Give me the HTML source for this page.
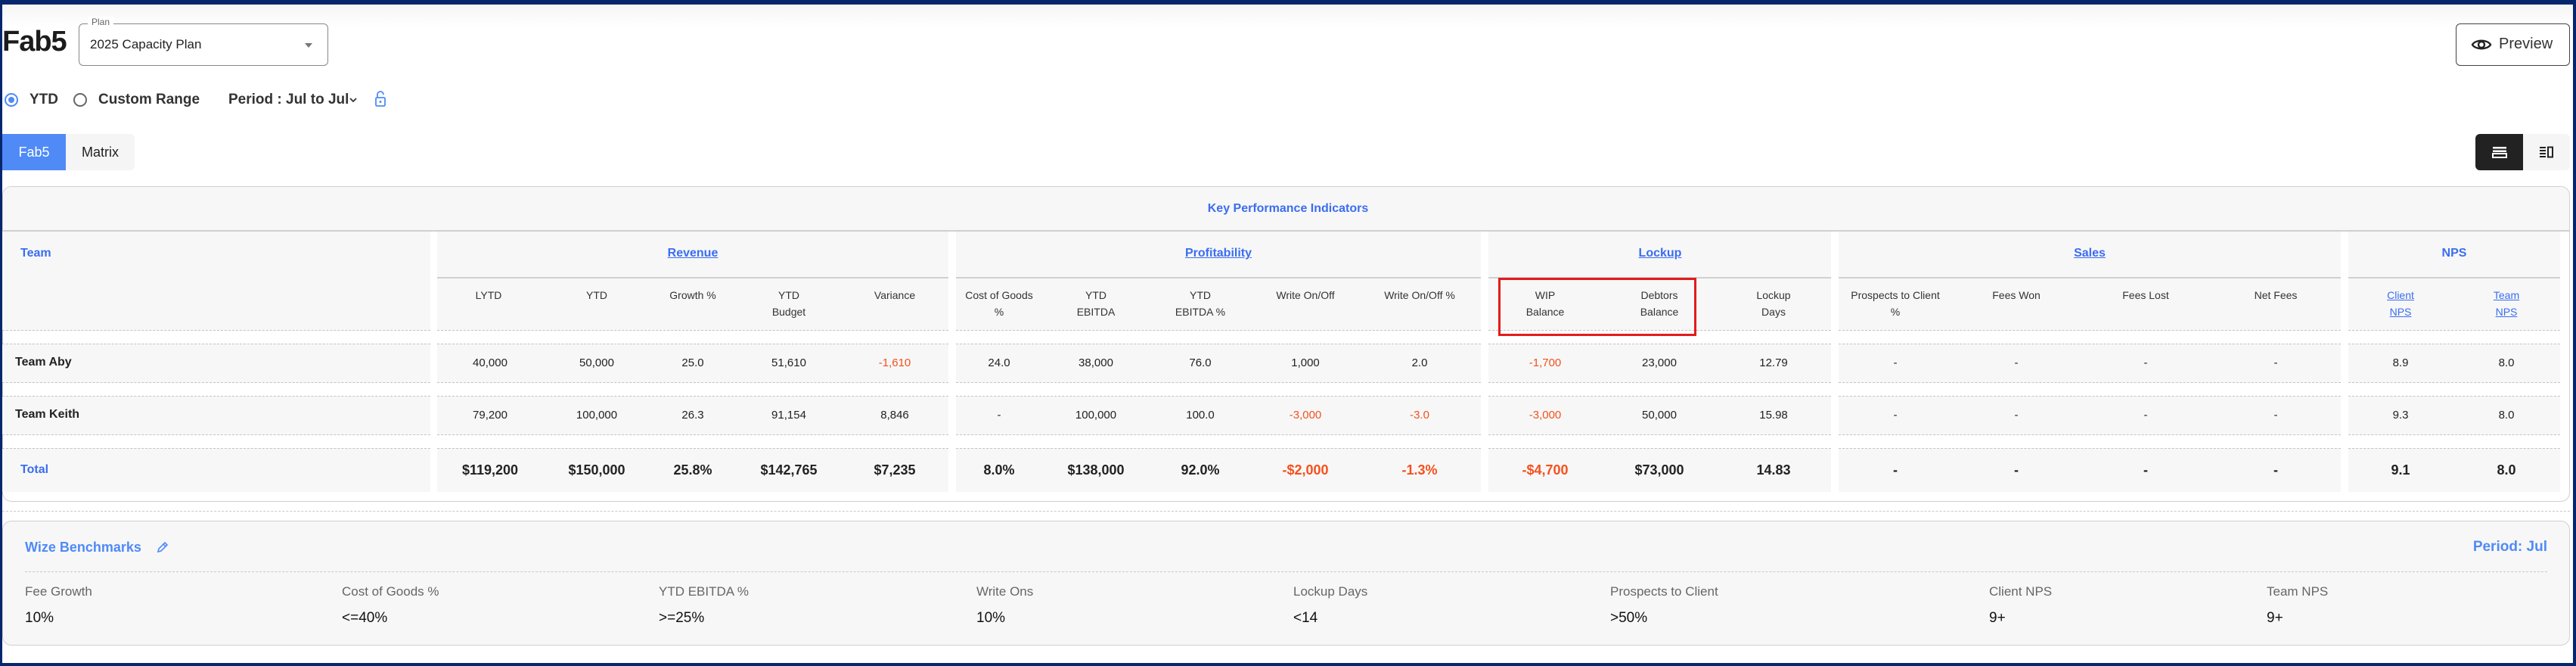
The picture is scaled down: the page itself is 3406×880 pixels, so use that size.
<!DOCTYPE html>
<html><head><meta charset="utf-8"><style>
*{margin:0;padding:0;box-sizing:border-box}
body{width:3406px;height:880px;position:relative;overflow:hidden;background:#fff;font-family:"Liberation Sans",sans-serif;color:#222}
.frame{position:absolute;left:0;top:0;width:3406px;height:880px;border-style:solid;border-color:#05266f;border-width:6px 4px 4px 3px;z-index:50;pointer-events:none}
.a{position:absolute}
.t{position:absolute;transform:translateX(-50%);text-align:center;white-space:nowrap}
.b{position:absolute;background:#f7f7f7}
.c1{left:3px;width:566px}.c2{left:578px;width:676px}.c3{left:1264px;width:694px}.c4{left:1968px;width:453px}.c5{left:2431px;width:664px}.c6{left:3105px;width:280px}
.r1{top:306px;height:131px;border-bottom:1px dashed #c4c4c4}
.r2{top:454px;height:52px;border-top:1px dashed #c4c4c4;border-bottom:1px dashed #c4c4c4}
.r3{top:523px;height:52px;border-top:1px dashed #c4c4c4;border-bottom:1px dashed #c4c4c4}
.r4{top:592px;height:58px;border-top:1px dashed #c4c4c4}
.gl{position:absolute;top:366px;height:2px;background:#d0d0d0}
.gh{position:absolute;top:326px;font-size:16px;font-weight:bold;color:#3a6df0;text-decoration:underline;transform:translateX(-50%)}
.sh{font-size:14px;line-height:22px;color:#333;top:379px}
.d1{top:471px;font-size:15px}.d2{top:540px;font-size:15px}.d3{top:611px;font-size:18px;font-weight:bold}
.red{color:#f4511e}
.bl{position:absolute;top:772px;font-size:17px;color:#666}
.bv{position:absolute;top:806px;font-size:19px;color:#111}
</style></head><body>
<div class="frame"></div>
<div class="a" style="left:0;top:6px;width:3406px;height:30px;background:linear-gradient(#f5f5f5,#fff)"></div>

<div class="a" style="left:3px;top:34px;font-size:38px;font-weight:bold;color:#1c1c1c;letter-spacing:-1px">Fab5</div>
<div class="a" style="left:104px;top:31px;width:330px;height:56px;border:1.5px solid #888;border-radius:6px"></div>
<div class="a" style="left:116px;top:22px;background:#fff;padding:0 5px;font-size:12px;color:#666">Plan</div>
<div class="a" style="left:119px;top:49px;font-size:17px;color:#222">2025 Capacity Plan</div>
<div class="a" style="left:403px;top:57px;width:0;height:0;border-left:5px solid transparent;border-right:5px solid transparent;border-top:6px solid #777"></div>

<div class="a" style="left:6px;top:123px;width:18px;height:18px;border:2px solid #4f8af7;border-radius:50%"><div style="margin:3px;width:8px;height:8px;border-radius:50%;background:#4f8af7"></div></div>
<div class="a" style="left:39px;top:121px;font-size:19px;font-weight:bold;color:#333">YTD</div>
<div class="a" style="left:97px;top:123px;width:18px;height:18px;border:2px solid #666;border-radius:50%"></div>
<div class="a" style="left:130px;top:121px;font-size:19px;font-weight:bold;color:#333">Custom Range</div>
<div class="a" style="left:302px;top:121px;font-size:19px;font-weight:bold;color:#333">Period : Jul to Jul</div>
<svg class="a" style="left:461px;top:127px" width="12" height="10" viewBox="0 0 12 10"><path d="M2 3l4 4 4-4" fill="none" stroke="#333" stroke-width="1.8"/></svg>
<svg class="a" style="left:495px;top:119px" width="16" height="24" viewBox="0 0 16 24"><path d="M4 10V6a4 4 0 0 1 8 0" fill="none" stroke="#4f8af7" stroke-width="1.8"/><rect x="2" y="10" width="12" height="11" rx="1.5" fill="none" stroke="#4f8af7" stroke-width="1.8"/><circle cx="8" cy="15.5" r="1.5" fill="#4f8af7"/></svg>

<div class="a" style="left:3px;top:177px;width:175px;height:48px;background:#f5f5f5;border-radius:0 6px 6px 0"></div>
<div class="a" style="left:3px;top:177px;width:84px;height:48px;background:#4f8af7;color:#fff;font-size:18px;line-height:48px;text-align:center">Fab5</div>
<div class="a" style="left:87px;top:177px;width:91px;height:48px;color:#222;font-size:18px;line-height:48px;text-align:center">Matrix</div>

<div class="a" style="left:3247px;top:31px;width:151px;height:56px;border:1.5px solid #444;border-radius:6px;font-size:20px;color:#333;line-height:53px;padding-left:56px">Preview</div>
<svg class="a" style="left:3267px;top:49px" width="28" height="20" viewBox="0 0 28 20"><path d="M2 10C6 3 22 3 26 10C22 17 6 17 2 10Z" fill="none" stroke="#222" stroke-width="2.4"/><circle cx="14" cy="10" r="4" fill="none" stroke="#222" stroke-width="2.4"/></svg>
<div class="a" style="left:3273px;top:177px;width:125px;height:48px;background:#f5f5f5;border-radius:6px"></div>
<div class="a" style="left:3273px;top:177px;width:63px;height:48px;background:#222;border-radius:6px 0 0 6px"></div>
<svg class="a" style="left:3295px;top:193px" width="20" height="16" viewBox="0 0 20 16"><rect x="1" y="1" width="18" height="2.5" fill="#fff"/><rect x="1" y="5.5" width="18" height="2.5" fill="#fff"/><rect x="1" y="10" width="18" height="5" fill="none" stroke="#fff" stroke-width="2"/></svg>
<svg class="a" style="left:3357px;top:193px" width="20" height="16" viewBox="0 0 20 16"><path d="M1 2h8M1 6h8M1 10h8M1 14h8" stroke="#222" stroke-width="2"/><rect x="12" y="1.5" width="6" height="13" fill="none" stroke="#222" stroke-width="2"/></svg>

<div class="a" style="left:3px;top:246px;width:3395px;height:417px;border:1.5px solid #d0d0d0;border-radius:12px;background:#fff"></div>
<div class="a" style="left:4px;top:247px;width:3393px;height:59px;background:#f7f7f7;border-bottom:2px solid #d0d0d0;border-radius:11px 11px 0 0"></div>
<div class="t" style="left:1703px;top:267px;font-size:16px;font-weight:bold;color:#3a6df0">Key Performance Indicators</div>

<div class="b c1 r1"></div><div class="b c2 r1"></div><div class="b c3 r1"></div><div class="b c4 r1"></div><div class="b c5 r1"></div><div class="b c6 r1"></div>
<div class="b c1 r2"></div><div class="b c2 r2"></div><div class="b c3 r2"></div><div class="b c4 r2"></div><div class="b c5 r2"></div><div class="b c6 r2"></div>
<div class="b c1 r3"></div><div class="b c2 r3"></div><div class="b c3 r3"></div><div class="b c4 r3"></div><div class="b c5 r3"></div><div class="b c6 r3"></div>
<div class="b c1 r4"></div><div class="b c2 r4"></div><div class="b c3 r4"></div><div class="b c4 r4"></div><div class="b c5 r4"></div><div class="b c6 r4"></div>
<div class="gl c2"></div><div class="gl c3"></div><div class="gl c4"></div><div class="gl c5"></div><div class="gl c6"></div>

<div class="a" style="left:27px;top:326px;font-size:16px;font-weight:bold;color:#3a6df0">Team</div>
<div class="gh" style="left:916px">Revenue</div>
<div class="gh" style="left:1611px">Profitability</div>
<div class="gh" style="left:2195px">Lockup</div>
<div class="gh" style="left:2763px">Sales</div>
<div class="gh" style="left:3245px;text-decoration:none">NPS</div>

<div class="t sh" style="left:646px">LYTD</div>
<div class="t sh" style="left:789px">YTD</div>
<div class="t sh" style="left:916px">Growth %</div>
<div class="t sh" style="left:1043px">YTD<br>Budget</div>
<div class="t sh" style="left:1183px">Variance</div>
<div class="t sh" style="left:1321px">Cost of Goods<br>%</div>
<div class="t sh" style="left:1449px">YTD<br>EBITDA</div>
<div class="t sh" style="left:1587px">YTD<br>EBITDA %</div>
<div class="t sh" style="left:1726px">Write On/Off</div>
<div class="t sh" style="left:1877px">Write On/Off %</div>
<div class="t sh" style="left:2043px">WIP<br>Balance</div>
<div class="t sh" style="left:2194px">Debtors<br>Balance</div>
<div class="t sh" style="left:2345px">Lockup<br>Days</div>
<div class="t sh" style="left:2506px">Prospects to Client<br>%</div>
<div class="t sh" style="left:2666px">Fees Won</div>
<div class="t sh" style="left:2837px">Fees Lost</div>
<div class="t sh" style="left:3009px">Net Fees</div>
<div class="t sh" style="left:3174px;color:#3a6df0;text-decoration:underline">Client<br>NPS</div>
<div class="t sh" style="left:3314px;color:#3a6df0;text-decoration:underline">Team<br>NPS</div>
<div class="a" style="left:1981px;top:367px;width:262px;height:77px;border:3.5px solid #e31b1b"></div>

<div class="a" style="left:20px;top:470px;font-size:16px;font-weight:bold">Team Aby</div>
<div class="t d1" style="left:648px">40,000</div><div class="t d1" style="left:789px">50,000</div><div class="t d1" style="left:916px">25.0</div><div class="t d1" style="left:1043px">51,610</div><div class="t d1 red" style="left:1183px">-1,610</div>
<div class="t d1" style="left:1321px">24.0</div><div class="t d1" style="left:1449px">38,000</div><div class="t d1" style="left:1587px">76.0</div><div class="t d1" style="left:1726px">1,000</div><div class="t d1" style="left:1877px">2.0</div>
<div class="t d1 red" style="left:2043px">-1,700</div><div class="t d1" style="left:2194px">23,000</div><div class="t d1" style="left:2345px">12.79</div>
<div class="t d1" style="left:2506px">-</div><div class="t d1" style="left:2666px">-</div><div class="t d1" style="left:2837px">-</div><div class="t d1" style="left:3009px">-</div>
<div class="t d1" style="left:3174px">8.9</div><div class="t d1" style="left:3314px">8.0</div>

<div class="a" style="left:20px;top:539px;font-size:16px;font-weight:bold">Team Keith</div>
<div class="t d2" style="left:648px">79,200</div><div class="t d2" style="left:789px">100,000</div><div class="t d2" style="left:916px">26.3</div><div class="t d2" style="left:1043px">91,154</div><div class="t d2" style="left:1183px">8,846</div>
<div class="t d2" style="left:1321px">-</div><div class="t d2" style="left:1449px">100,000</div><div class="t d2" style="left:1587px">100.0</div><div class="t d2 red" style="left:1726px">-3,000</div><div class="t d2 red" style="left:1877px">-3.0</div>
<div class="t d2 red" style="left:2043px">-3,000</div><div class="t d2" style="left:2194px">50,000</div><div class="t d2" style="left:2345px">15.98</div>
<div class="t d2" style="left:2506px">-</div><div class="t d2" style="left:2666px">-</div><div class="t d2" style="left:2837px">-</div><div class="t d2" style="left:3009px">-</div>
<div class="t d2" style="left:3174px">9.3</div><div class="t d2" style="left:3314px">8.0</div>

<div class="a" style="left:27px;top:612px;font-size:16px;font-weight:bold;color:#3a6df0">Total</div>
<div class="t d3" style="left:648px">$119,200</div><div class="t d3" style="left:789px">$150,000</div><div class="t d3" style="left:916px">25.8%</div><div class="t d3" style="left:1043px">$142,765</div><div class="t d3" style="left:1183px">$7,235</div>
<div class="t d3" style="left:1321px">8.0%</div><div class="t d3" style="left:1449px">$138,000</div><div class="t d3" style="left:1587px">92.0%</div><div class="t d3 red" style="left:1726px">-$2,000</div><div class="t d3 red" style="left:1877px">-1.3%</div>
<div class="t d3 red" style="left:2043px">-$4,700</div><div class="t d3" style="left:2194px">$73,000</div><div class="t d3" style="left:2345px">14.83</div>
<div class="t d3" style="left:2506px">-</div><div class="t d3" style="left:2666px">-</div><div class="t d3" style="left:2837px">-</div><div class="t d3" style="left:3009px">-</div>
<div class="t d3" style="left:3174px">9.1</div><div class="t d3" style="left:3314px">8.0</div>

<div class="a" style="left:3px;top:675px;width:3395px;border-top:1px dashed #c8c8c8"></div>

<div class="a" style="left:3px;top:688px;width:3395px;height:165px;border:1.5px solid #d0d0d0;border-radius:12px;background:#f7f7f7"></div>
<div class="a" style="left:33px;top:713px;font-size:18px;font-weight:bold;color:#4f8af7">Wize Benchmarks</div>
<svg class="a" style="left:205px;top:713px" width="18" height="20" viewBox="0 0 18 20"><path d="M4 16l1-4 8-8 3 3-8 8-4 1zM11 6l3 3" fill="none" stroke="#4f8af7" stroke-width="1.6"/></svg>
<div class="a" style="right:38px;top:712px;font-size:19px;font-weight:bold;color:#4f8af7">Period: Jul</div>
<div class="a" style="left:33px;top:755px;width:3335px;border-top:1px dashed #c8c8c8"></div>
<div class="bl" style="left:33px">Fee Growth</div><div class="bv" style="left:33px">10%</div>
<div class="bl" style="left:452px">Cost of Goods %</div><div class="bv" style="left:452px">&lt;=40%</div>
<div class="bl" style="left:871px">YTD EBITDA %</div><div class="bv" style="left:871px">&gt;=25%</div>
<div class="bl" style="left:1291px">Write Ons</div><div class="bv" style="left:1291px">10%</div>
<div class="bl" style="left:1710px">Lockup Days</div><div class="bv" style="left:1710px">&lt;14</div>
<div class="bl" style="left:2129px">Prospects to Client</div><div class="bv" style="left:2129px">&gt;50%</div>
<div class="bl" style="left:2630px">Client NPS</div><div class="bv" style="left:2630px">9+</div>
<div class="bl" style="left:2997px">Team NPS</div><div class="bv" style="left:2997px">9+</div>
</body></html>
